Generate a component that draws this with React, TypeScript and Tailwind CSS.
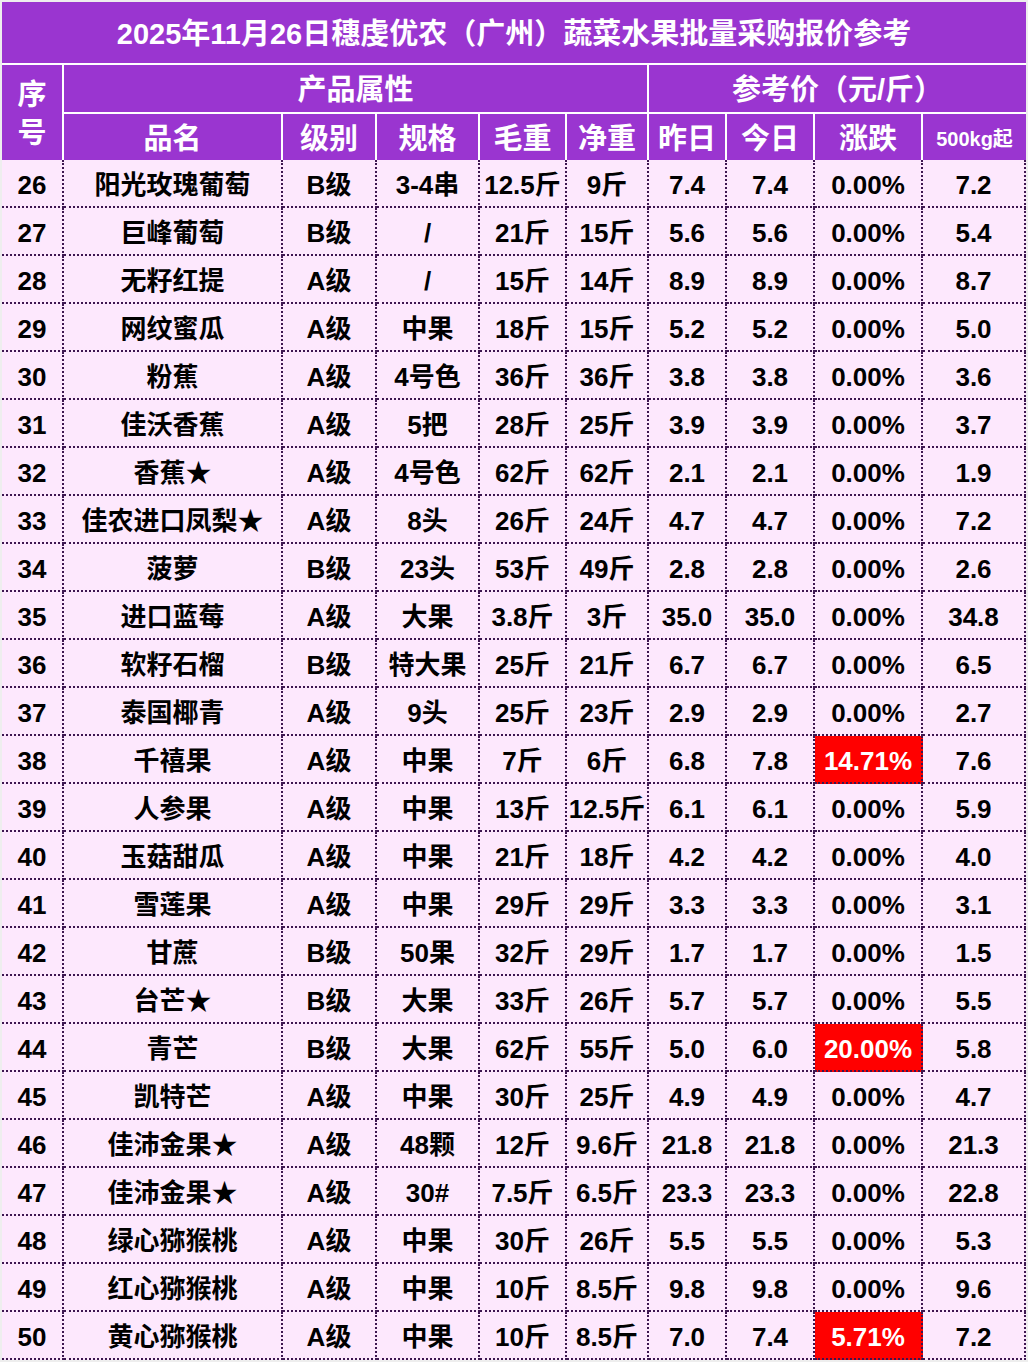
import React from "react";

type Row = [string, string, string, string, string, string, string, string, string, string, boolean?];

const rows: Row[] = [
  ["26", "阳光玫瑰葡萄", "B级", "3-4串", "12.5斤", "9斤", "7.4", "7.4", "0.00%", "7.2"],
  ["27", "巨峰葡萄", "B级", "/", "21斤", "15斤", "5.6", "5.6", "0.00%", "5.4"],
  ["28", "无籽红提", "A级", "/", "15斤", "14斤", "8.9", "8.9", "0.00%", "8.7"],
  ["29", "网纹蜜瓜", "A级", "中果", "18斤", "15斤", "5.2", "5.2", "0.00%", "5.0"],
  ["30", "粉蕉", "A级", "4号色", "36斤", "36斤", "3.8", "3.8", "0.00%", "3.6"],
  ["31", "佳沃香蕉", "A级", "5把", "28斤", "25斤", "3.9", "3.9", "0.00%", "3.7"],
  ["32", "香蕉★", "A级", "4号色", "62斤", "62斤", "2.1", "2.1", "0.00%", "1.9"],
  ["33", "佳农进口凤梨★", "A级", "8头", "26斤", "24斤", "4.7", "4.7", "0.00%", "7.2"],
  ["34", "菠萝", "B级", "23头", "53斤", "49斤", "2.8", "2.8", "0.00%", "2.6"],
  ["35", "进口蓝莓", "A级", "大果", "3.8斤", "3斤", "35.0", "35.0", "0.00%", "34.8"],
  ["36", "软籽石榴", "B级", "特大果", "25斤", "21斤", "6.7", "6.7", "0.00%", "6.5"],
  ["37", "泰国椰青", "A级", "9头", "25斤", "23斤", "2.9", "2.9", "0.00%", "2.7"],
  ["38", "千禧果", "A级", "中果", "7斤", "6斤", "6.8", "7.8", "14.71%", "7.6", true],
  ["39", "人参果", "A级", "中果", "13斤", "12.5斤", "6.1", "6.1", "0.00%", "5.9"],
  ["40", "玉菇甜瓜", "A级", "中果", "21斤", "18斤", "4.2", "4.2", "0.00%", "4.0"],
  ["41", "雪莲果", "A级", "中果", "29斤", "29斤", "3.3", "3.3", "0.00%", "3.1"],
  ["42", "甘蔗", "B级", "50果", "32斤", "29斤", "1.7", "1.7", "0.00%", "1.5"],
  ["43", "台芒★", "B级", "大果", "33斤", "26斤", "5.7", "5.7", "0.00%", "5.5"],
  ["44", "青芒", "B级", "大果", "62斤", "55斤", "5.0", "6.0", "20.00%", "5.8", true],
  ["45", "凯特芒", "A级", "中果", "30斤", "25斤", "4.9", "4.9", "0.00%", "4.7"],
  ["46", "佳沛金果★", "A级", "48颗", "12斤", "9.6斤", "21.8", "21.8", "0.00%", "21.3"],
  ["47", "佳沛金果★", "A级", "30#", "7.5斤", "6.5斤", "23.3", "23.3", "0.00%", "22.8"],
  ["48", "绿心猕猴桃", "A级", "中果", "30斤", "26斤", "5.5", "5.5", "0.00%", "5.3"],
  ["49", "红心猕猴桃", "A级", "中果", "10斤", "8.5斤", "9.8", "9.8", "0.00%", "9.6"],
  ["50", "黄心猕猴桃", "A级", "中果", "10斤", "8.5斤", "7.0", "7.4", "5.71%", "7.2", true],
];

const cols = "grid grid-cols-[62px_219px_94px_103px_87px_82px_78px_88px_108px_103px]";

const hBase = "flex items-center justify-center text-white font-bold leading-none whitespace-nowrap pt-[4px]";
const hCell = `${hBase} text-[29px]`;
const dBase =
  "flex items-center justify-center h-[48px] pt-[3px] border-r-2 border-b-2 border-dotted border-[#3d1650] text-[26px] font-bold leading-none whitespace-nowrap";

export default function App() {
  return (
    <div className="w-[1028px] min-h-[1362px] bg-[#eeeeee] pt-[2px] pl-[2px] font-['Liberation_Sans','Noto_Sans_CJK_SC',sans-serif]">
      <div className="w-[1024px] flex flex-col">
        <div className="h-[63px] pt-[4px] bg-[#9a35d0] border-b-2 border-white flex items-center justify-center text-white font-bold text-[29px] leading-none">
          2025年11月26日穗虔优农（广州）蔬菜水果批量采购报价参考
        </div>
        <div className={`${cols} grid-rows-[49px_46px] bg-[#9a35d0]`}>
          <div className={`${hCell} row-span-2 col-start-1 row-start-1 border-r-2 border-white flex-col gap-[9px]`}>
            <span>序</span>
            <span>号</span>
          </div>
          <div className={`${hCell} col-span-5 col-start-2 row-start-1 border-r-2 border-b-2 border-white`}>产品属性</div>
          <div className={`${hCell} col-span-4 col-start-7 row-start-1 border-b-2 border-white`}>参考价（元/斤）</div>
          <div className={`${hCell} border-r-2 border-white`}>品名</div>
          <div className={`${hCell} border-r-2 border-white`}>级别</div>
          <div className={`${hCell} border-r-2 border-white`}>规格</div>
          <div className={`${hCell} border-r-2 border-white`}>毛重</div>
          <div className={`${hCell} border-r-2 border-white`}>净重</div>
          <div className={`${hCell} border-r-2 border-white`}>昨日</div>
          <div className={`${hCell} border-r-2 border-white`}>今日</div>
          <div className={`${hCell} border-r-2 border-white`}>涨跌</div>
          <div className={`${hBase} text-[20px]`}>500kg起</div>
        </div>
        <div className="flex flex-col bg-[#fde8fd]">
          {rows.map((r) => (
            <div key={r[0]} className={cols}>
              {r.slice(0, 10).map((v, i) => (
                <div
                  key={i}
                  className={
                    i === 8 && r[10]
                      ? `${dBase} bg-[#ff0000] text-white`
                      : `${dBase} text-black`
                  }
                >
                  {v as string}
                </div>
              ))}
            </div>
          ))}
        </div>
      </div>
    </div>
  );
}
